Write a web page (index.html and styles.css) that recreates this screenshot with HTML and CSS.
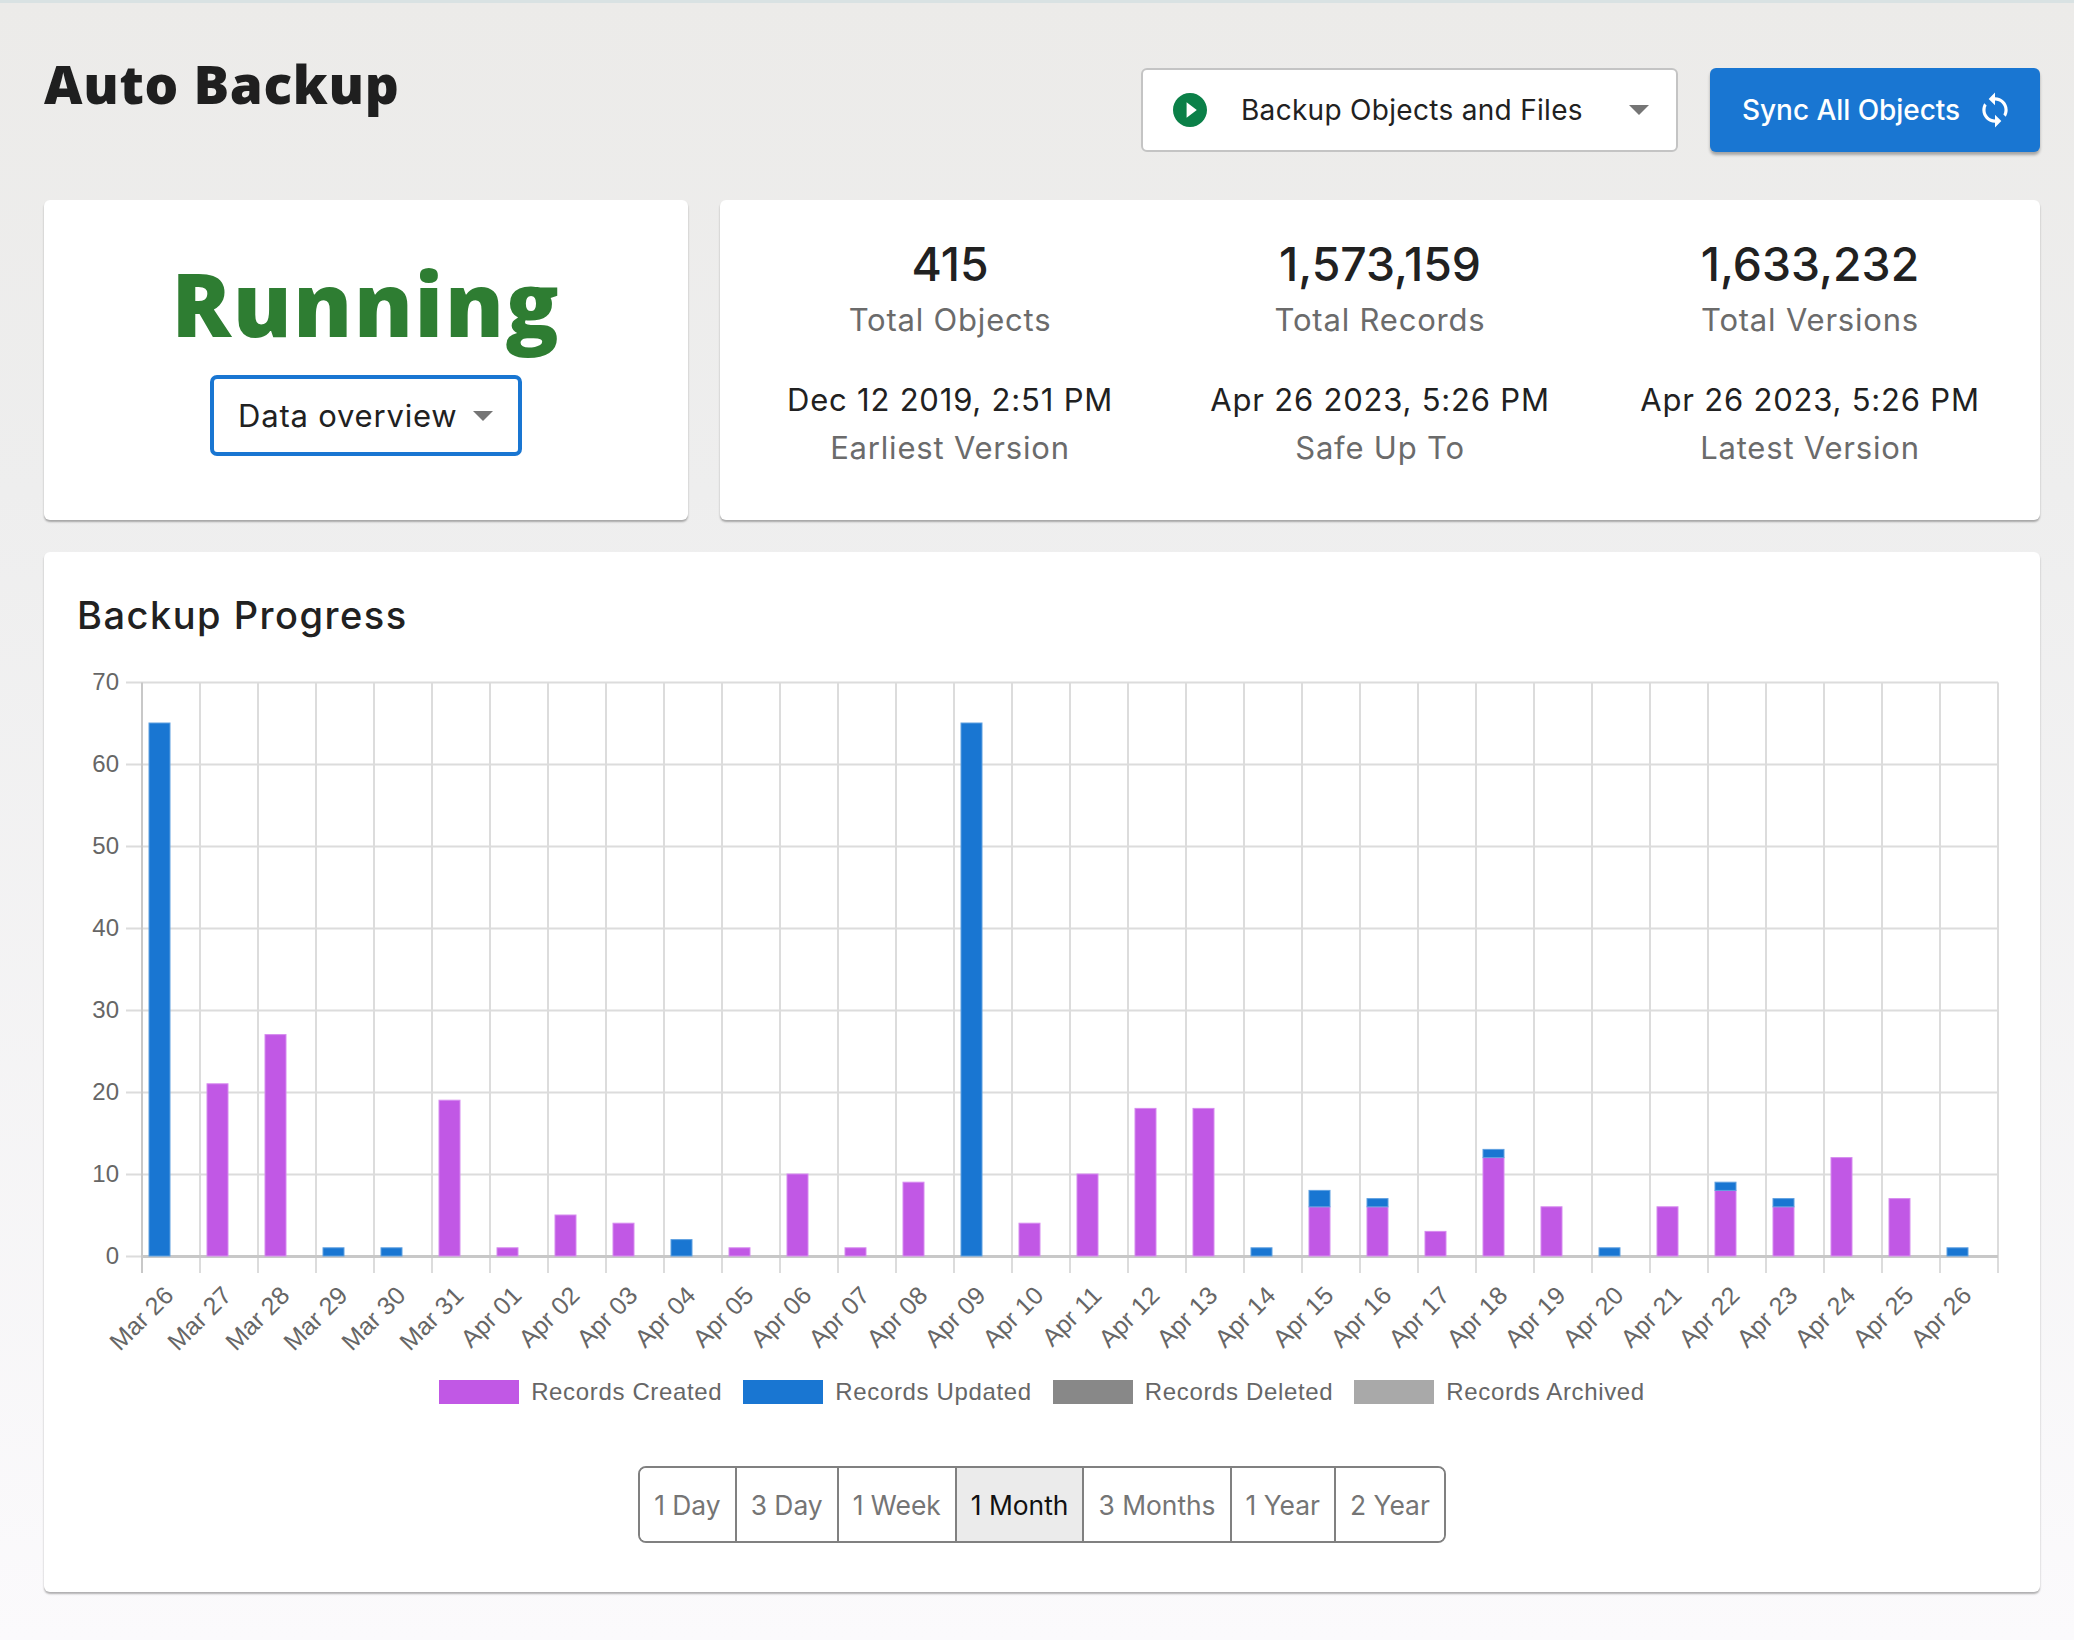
FILE: index.html

```html
<!DOCTYPE html>
<html lang="en">
<head>
  <meta charset="UTF-8">
  <meta name="viewport" content="width=device-width, initial-scale=1.0">
  <title>Auto Backup</title>
  <link rel="stylesheet" href="styles.css">
</head>
<body>
  <div class="page">
    <header class="top-bar">
      <h1 class="page-title">Auto Backup</h1>
      <div class="top-actions">
        <div class="job-select">
          <svg class="job-icon" viewBox="2 2 20 20"><path d="M12 2C6.48 2 2 6.48 2 12s4.48 10 10 10 10-4.48 10-10S17.52 2 12 2zm-2 14.5v-9l6 4.5-6 4.5z"/></svg>
          <span class="job-label">Backup Objects and Files</span>
          <span class="caret"></span>
        </div>
        <button class="sync-btn" type="button">
          Sync All Objects
          <svg class="sync-icon" viewBox="0 0 24 24"><path d="M12 4V1L8 5l4 4V6c3.31 0 6 2.69 6 6 0 1.01-.25 1.97-.7 2.8l1.46 1.46C19.54 15.03 20 13.57 20 12c0-4.42-3.58-8-8-8zm0 14c-3.31 0-6-2.69-6-6 0-1.01.25-1.97.7-2.8L5.24 7.74C4.46 8.97 4 10.43 4 12c0 4.42 3.58 8 8 8v3l4-4-4-4v3z"/></svg>
        </button>
      </div>
    </header>

    <section class="summary">
      <div class="card status-card">
        <div class="status-text">Running</div>
        <div class="view-select">
          <span>Data overview</span>
          <span class="caret"></span>
        </div>
      </div>
      <div class="card stats-card">
        <div class="stat"><div class="stat-big">415</div><div class="stat-label">Total Objects</div></div>
        <div class="stat"><div class="stat-big">1,573,159</div><div class="stat-label">Total Records</div></div>
        <div class="stat"><div class="stat-big">1,633,232</div><div class="stat-label">Total Versions</div></div>
        <div class="stat"><div class="stat-date">Dec 12 2019, 2:51 PM</div><div class="stat-label">Earliest Version</div></div>
        <div class="stat"><div class="stat-date">Apr 26 2023, 5:26 PM</div><div class="stat-label">Safe Up To</div></div>
        <div class="stat"><div class="stat-date">Apr 26 2023, 5:26 PM</div><div class="stat-label">Latest Version</div></div>
      </div>
    </section>

    <section class="card progress-card">
      <h2 class="progress-title">Backup Progress</h2>
      <svg id="chart" class="chart" viewBox="77 660 1930 700"></svg>
      <div class="legend">
        <div class="legend-item"><span class="swatch swatch-created"></span>Records Created</div>
        <div class="legend-item"><span class="swatch swatch-updated"></span>Records Updated</div>
        <div class="legend-item"><span class="swatch swatch-deleted"></span>Records Deleted</div>
        <div class="legend-item"><span class="swatch swatch-archived"></span>Records Archived</div>
      </div>
      <div class="ranges">
        <button class="range" type="button">1 Day</button>
        <button class="range" type="button">3 Day</button>
        <button class="range" type="button">1 Week</button>
        <button class="range active" type="button">1 Month</button>
        <button class="range" type="button">3 Months</button>
        <button class="range" type="button">1 Year</button>
        <button class="range" type="button">2 Year</button>
      </div>
    </section>
  </div>

  <script>
    // [label, created, updated]
    const days = [
      ['Mar 26', 0, 65], ['Mar 27', 21, 0], ['Mar 28', 27, 0], ['Mar 29', 0, 1],
      ['Mar 30', 0, 1], ['Mar 31', 19, 0], ['Apr 01', 1, 0], ['Apr 02', 5, 0],
      ['Apr 03', 4, 0], ['Apr 04', 0, 2], ['Apr 05', 1, 0], ['Apr 06', 10, 0],
      ['Apr 07', 1, 0], ['Apr 08', 9, 0], ['Apr 09', 0, 65], ['Apr 10', 4, 0],
      ['Apr 11', 10, 0], ['Apr 12', 18, 0], ['Apr 13', 18, 0], ['Apr 14', 0, 1],
      ['Apr 15', 6, 2], ['Apr 16', 6, 1], ['Apr 17', 3, 0], ['Apr 18', 12, 1],
      ['Apr 19', 6, 0], ['Apr 20', 0, 1], ['Apr 21', 6, 0], ['Apr 22', 8, 1],
      ['Apr 23', 6, 1], ['Apr 24', 12, 0], ['Apr 25', 7, 0], ['Apr 26', 0, 1]
    ];

    const left = 142, right = 1998, bottom = 1256.5, perUnit = 8.2, tickEnd = 1273;
    const step = (right - left) / days.length;
    const barW = 21;
    let out = '';

    for (let v = 70; v >= 0; v -= 10) {
      const y = bottom - v * perUnit;
      out += `<line class="grid" x1="${left - 16}" x2="${right}" y1="${y}" y2="${y}"/>`;
      out += `<text class="tick-y" x="${left - 23}" y="${y + 7.5}">${v}</text>`;
    }

    for (let i = 0; i <= days.length; i++) {
      const x = left + i * step;
      out += `<line class="${i === 0 ? 'axis-left' : 'grid'}" x1="${x}" x2="${x}" y1="${bottom - 70 * perUnit}" y2="${tickEnd}"/>`;
    }
    out += `<line class="axis" x1="${left}" x2="${right}" y1="${bottom}" y2="${bottom}"/>`;

    days.forEach((d, i) => {
      const x = left + i * step + 7;
      const hc = d[1] * perUnit, hu = d[2] * perUnit;
      if (hc) out += `<rect class="bar-created" x="${x}" y="${bottom - 0.5 - hc}" width="${barW}" height="${hc}"/>`;
      if (hu) out += `<rect class="bar-updated" x="${x}" y="${bottom - 0.5 - hc - hu}" width="${barW}" height="${hu}"/>`;
      const lx = left + i * step + 33, ly = 1297;
      out += `<text class="tick-x" transform="translate(${lx} ${ly}) rotate(-45)">${d[0]}</text>`;
    });

    document.getElementById('chart').innerHTML = out;
  </script>
</body>
</html>
```

FILE: styles.css

```css
* {
  box-sizing: border-box;
}
body {
  margin: 0;
  font-family: 'Inter', 'Liberation Sans', sans-serif;
  background: linear-gradient(#ecebe9, #eeeeee 30%, #fbfafc);
  color: #212121;
}
.page {
  height: 1640px;
  border-top: 3px solid #d9e2e3;
  padding: 0 34px 0 44px;
}
.top-bar {
  display: flex;
  justify-content: space-between;
  align-items: flex-start;
  height: 197px;
}
.page-title {
  margin: 45px 0 0;
  font-family: 'Open Sans', sans-serif;
  font-size: 53px;
  line-height: 72px;
  font-weight: 800;
  letter-spacing: 0.7px;
  color: #1f1f1f;
}
.top-actions {
  display: flex;
  gap: 32px;
  margin-top: 65px;
}
.job-select {
  display: flex;
  align-items: center;
  width: 537px;
  height: 84px;
  padding: 0 27px 0 30px;
  background: #fff;
  border: 2px solid #c4c4c4;
  border-radius: 6px;
}
.job-icon {
  width: 34px;
  height: 34px;
  fill: #0b8048;
}
.job-label {
  flex: 1;
  margin-left: 34px;
  font-size: 28px;
  letter-spacing: 0.3px;
}
.caret {
  width: 0;
  height: 0;
  border-left: 10px solid transparent;
  border-right: 10px solid transparent;
  border-top: 10px solid #757575;
}
.sync-btn {
  display: flex;
  align-items: center;
  justify-content: space-between;
  width: 330px;
  height: 84px;
  padding: 0 26px 0 32px;
  background: #1976d2;
  color: #fff;
  font-family: inherit;
  font-size: 28px;
  font-weight: 500;
  letter-spacing: -0.05px;
  border: none;
  border-radius: 6px;
  box-shadow: 0 3px 3px rgba(0, 0, 0, 0.3);
}
.sync-icon {
  width: 38px;
  height: 38px;
  fill: #fff;
}
.card {
  background: #fff;
  border-radius: 6px;
  box-shadow: 0 2px 2px rgba(0, 0, 0, 0.3);
}
.summary {
  display: flex;
  gap: 32px;
  height: 320px;
}
.status-card {
  display: flex;
  flex-direction: column;
  align-items: center;
  width: 644px;
}
.status-text {
  margin-top: 45px;
  margin-bottom: 14px;
  font-family: 'Open Sans', sans-serif;
  font-size: 88px;
  line-height: 116px;
  font-weight: 800;
  letter-spacing: 1.7px;
  color: #2e7d32;
}
.view-select {
  display: flex;
  align-items: center;
  justify-content: space-between;
  width: 312px;
  height: 81px;
  padding: 0 25px 0 24px;
  border: 4px solid #1976d2;
  border-radius: 7px;
  font-size: 31px;
  letter-spacing: 0.8px;
}
.stats-card {
  flex: 1;
  display: grid;
  grid-template-columns: repeat(3, 1fr);
  grid-template-rows: 141px 1fr;
  padding: 35px 15px 0;
  text-align: center;
}
.stat-big {
  margin-bottom: 3px;
  font-size: 46.3px;
  line-height: 58px;
  font-weight: 500;
}
.stat-date {
  font-size: 31px;
  line-height: 48px;
  letter-spacing: 0.8px;
}
.stat-label {
  font-size: 31px;
  line-height: 48px;
  letter-spacing: 0.8px;
  color: #6b6b6b;
}
.progress-card {
  margin-top: 32px;
  height: 1040px;
  padding: 40px 33px 0;
}
.progress-title {
  margin: 0;
  font-size: 38px;
  line-height: 46px;
  font-weight: 500;
  letter-spacing: 1.5px;
}
.chart {
  display: block;
  width: 1930px;
  height: 700px;
  margin-top: 22px;
}
.chart text {
  font-family: 'Liberation Sans', sans-serif;
  fill: #666;
}
.chart .tick-y {
  font-size: 24px;
  text-anchor: end;
}
.chart .tick-x {
  font-size: 25px;
  text-anchor: end;
}
.grid {
  stroke: #dcdcdc;
  stroke-width: 2;
}
.axis {
  stroke: #c8c8c8;
  stroke-width: 3;
}
.axis-left {
  stroke: #c8c8c8;
  stroke-width: 2;
}
.bar-created {
  fill: #c158e5;
  stroke: #d68bef;
  stroke-width: 1;
}
.bar-updated {
  fill: #1976d2;
  stroke: #5fa0e0;
  stroke-width: 1;
}
.legend {
  display: flex;
  justify-content: center;
  gap: 21px;
  margin-top: 20px;
  font-family: 'Liberation Sans', sans-serif;
  font-size: 24px;
  line-height: 24px;
  letter-spacing: 0.65px;
  color: #666;
}
.legend-item {
  display: flex;
  align-items: center;
  gap: 12px;
}
.swatch {
  width: 80px;
  height: 24px;
}
.swatch-created {
  background: #c158e5;
}
.swatch-updated {
  background: #1976d2;
}
.swatch-deleted {
  background: #888;
}
.swatch-archived {
  background: #a9a9a9;
}
.ranges {
  display: flex;
  width: fit-content;
  height: 77px;
  margin: 62px auto 0;
  border: 2px solid #808080;
  border-radius: 8px;
  overflow: hidden;
}
.range {
  padding: 0 14px;
  background: #fff;
  color: #757575;
  font-family: inherit;
  font-size: 26.4px;
  border: none;
  border-left: 2px solid #808080;
}
.range:first-child {
  border-left: none;
}
.range.active {
  background: #ebebeb;
  color: #111;
}
```
